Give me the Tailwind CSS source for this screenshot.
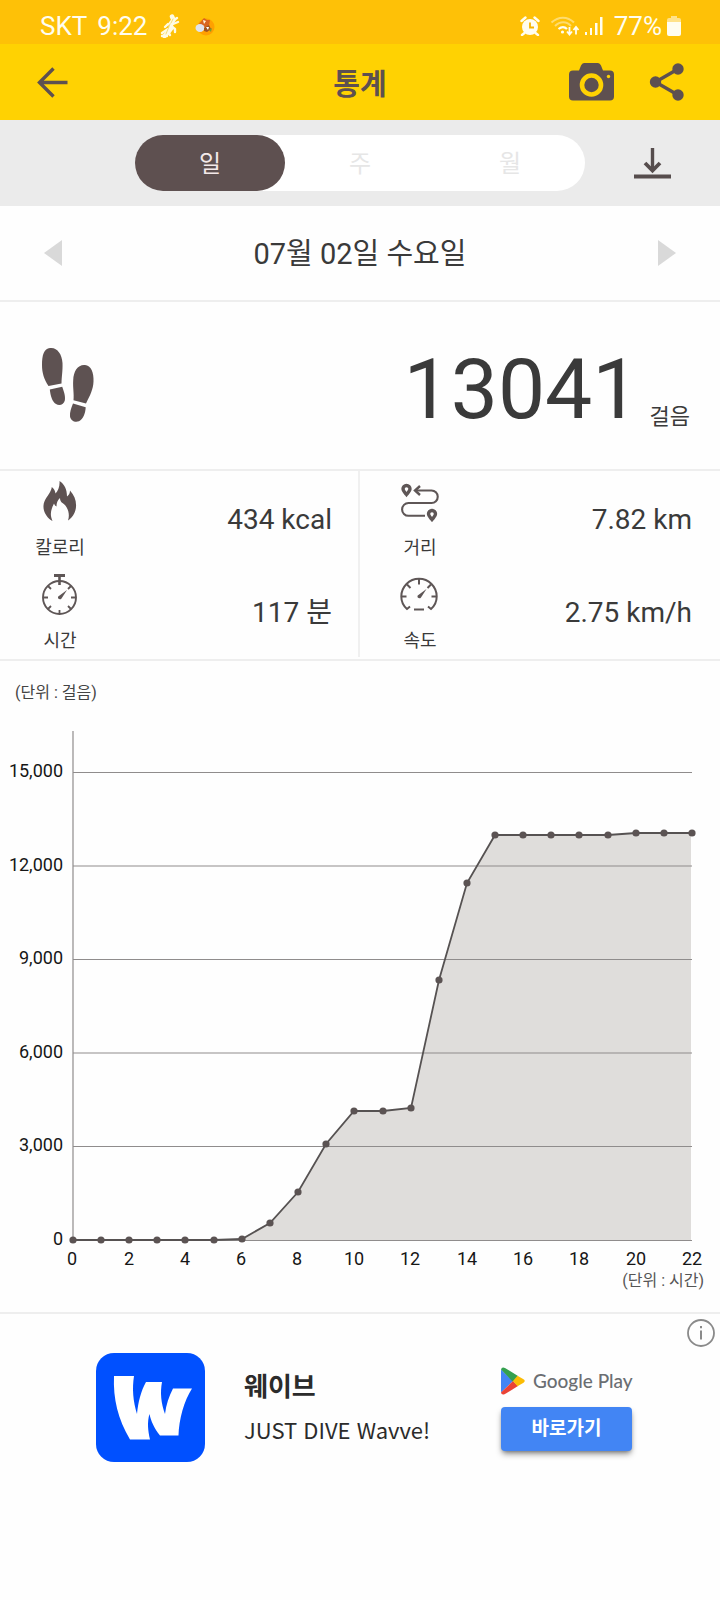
<!DOCTYPE html>
<html lang="ko">
<head>
<meta charset="utf-8">
<meta name="viewport" content="width=device-width, initial-scale=1">
<title>통계</title>
<script src="https://cdn.jsdelivr.net/npm/@tailwindcss/browser@4"></script>
</head>
<body class="min-h-screen bg-[#fefefe] font-['Roboto','Noto_Sans_CJK_KR',sans-serif] text-[#3a3a3a]">

<!-- Status bar -->
<div class="flex h-11 items-center bg-[#fec107] pt-2 pr-[38px] pl-10 text-[26px] leading-9 text-[#fffdf0]">
  <span>SKT</span><span class="ml-[10px]">9:22</span>
  <svg class="ml-3 size-6" viewBox="0 0 24 24" fill="none" stroke="#fffbe6" stroke-linecap="round" stroke-linejoin="round" aria-hidden="true">
    <path d="M13 2.500l1.500 3.500-3 4 1 4-3 4-4 4" stroke-width="4.500"/>
    <path d="M12 8l6-4M14 10l5-2M12 12l4 3 0 3M9 10l-3 3M9 15l-6 4M3 22h5M8 17l3 4" stroke-width="2.400"/>
    <path d="M11 10l-4 10M14 5l-2 4" stroke="#f3dc7a" stroke-width="1"/>
  </svg>
  <svg class="ml-3 size-5" viewBox="0 0 20 20" aria-hidden="true">
    <circle cx="11" cy="11" r="8.500" fill="#ffa000"/>
    <path d="M4 8l5-6 3 2 3 0-1 6-5 2z" fill="#d9641f"/>
    <path d="M8 4l3 1-2 3z" fill="#fff4dd"/>
    <ellipse cx="5" cy="12" rx="4.500" ry="4" fill="#dfe4ee"/>
    <path d="M9 12l5-3 2 4-4 3-3-1z" fill="#a2541f"/>
    <path d="M11 11l3 0-1 3z" fill="#fff"/>
    <path d="M14 14l3-2-1 4z" fill="#7d9b2c"/>
  </svg>
  <svg class="ml-auto size-5" viewBox="0 0 20 20" fill="none" aria-hidden="true">
    <circle cx="10" cy="11" r="8" fill="#fffdf0"/>
    <path d="M1.500 5l4-3.500M18.500 5l-4-3.500M4.500 17l-2.500 2M15.500 17l2.500 2" stroke="#fffdf0" stroke-width="2.400" stroke-linecap="round"/>
    <path d="M10 6.500v5h4" stroke="#f5b400" stroke-width="1.800"/>
  </svg>
  <svg class="ml-2.5 h-5 w-7.5" viewBox="0 0 30 20" fill="none" stroke="#fffdf0" aria-hidden="true">
    <path d="M1.500 6.500c7-6.500 16-6.500 22.500 0M5 10c5-5 11.500-5 16 0" stroke-width="2" opacity=".45"/>
    <path d="M8.500 13c3-2.500 6-2.500 8.500 0" stroke-width="2.200"/>
    <circle cx="12.500" cy="16" r="1.600" fill="#fffdf0" stroke="none"/>
    <path d="M19.500 11v7M17 15.500l2.500 3 2.500-3M26 18.500v-7M23.500 14l2.500-3 2.500 3" stroke-width="1.800"/>
  </svg>
  <svg class="ml-1 h-5 w-5" viewBox="0 0 20 20" fill="#fffdf0" aria-hidden="true">
    <path d="M1 16h2v3H1zM6 12h2v7H6zM11 7h2.500v12H11zM16 1h2.500v18H16z"/>
  </svg>
  <span class="ml-2.5">77%</span>
  <svg class="ml-1 h-5 w-4" viewBox="0 0 16 20" aria-hidden="true">
    <path d="M5 0h6v2h2q2 0 2 2v3H1V4q0-2 2-2h2z" fill="#ffe28a"/>
    <path d="M1 6h14v12q0 2-2 2H3q-2 0-2-2z" fill="#fffdf0"/>
  </svg>
</div>

<!-- Title bar -->
<header class="grid h-[76px] grid-cols-[1fr_auto_1fr] items-center bg-[#ffd202] px-9 text-[#5e5050]">
  <button type="button" aria-label="뒤로" class="w-9">
    <svg class="h-9 w-9" viewBox="0 0 36 36" fill="none" stroke="currentColor" stroke-width="3.400"><path d="M31.500 18.500H4.500M17.500 4.500l-14 14 14 14"/></svg>
  </button>
  <h1 class="pt-1.5 text-[29px] leading-9 font-bold">통계</h1>
  <div class="flex items-center justify-end gap-8">
    <button type="button" aria-label="카메라">
      <svg class="h-10 w-12" viewBox="0 0 48 40" fill="currentColor" aria-hidden="true">
        <path d="M13 3.500q1-2.500 3-2.500h14q2 0 3 2.500l2 5h7q4 0 4 4v22q0 4-4 4H5q-4 0-4-4v-22q0-4 4-4h6z"/>
        <circle cx="23.500" cy="23" r="9.500" fill="none" stroke="#ffd202" stroke-width="4.600"/>
        <circle cx="40.500" cy="14.500" r="1.700" fill="#ffd202"/>
      </svg>
    </button>
    <button type="button" aria-label="공유">
      <svg class="h-10 w-9" viewBox="0 0 36 40" fill="currentColor" aria-hidden="true">
        <path d="M30 7L7.500 20 30 33" fill="none" stroke="currentColor" stroke-width="3.400"/>
        <circle cx="30" cy="7" r="5.700"/><circle cx="7.500" cy="20" r="5.700"/><circle cx="30" cy="33" r="5.700"/>
      </svg>
    </button>
  </div>
</header>

<!-- Period tabs -->
<nav class="grid h-[86px] grid-cols-[3fr_10fr_3fr] items-center bg-[#ebebeb]">
  <div class="col-start-2 grid h-14 grid-cols-3 rounded-full bg-white text-2xl text-[#e6e6e6]">
    <button type="button" aria-pressed="true" class="rounded-full bg-[#5e5050] pt-0.5 text-[#f3e9e9]">일</button>
    <button type="button" aria-pressed="false" class="rounded-full pt-0.5">주</button>
    <button type="button" aria-pressed="false" class="rounded-full pt-0.5">월</button>
  </div>
  <button type="button" aria-label="다운로드" class="ml-12 w-10">
    <svg class="h-9 w-10" viewBox="0 0 40 36" fill="none" stroke="#564d4d" aria-hidden="true">
      <path d="M19.500 3v21" stroke-width="3.400"/><path d="M12 18l7.500 7.500L27 18" stroke-width="3.800"/><path d="M1 31.500h37" stroke-width="3.800"/>
    </svg>
  </button>
</nav>

<main>
  <!-- Date picker -->
  <section class="flex h-24 items-center justify-between border-b-2 border-[#eeeeee] px-11">
    <button type="button" aria-label="이전 날짜"><svg class="h-[26px] w-[18px]" viewBox="0 0 18 26"><path d="M18 0v26L0 13z" fill="#d9d9d9"/></svg></button>
    <h2 class="pt-0.5 text-[29px] leading-10">07월 02일 수요일</h2>
    <button type="button" aria-label="다음 날짜"><svg class="h-[26px] w-[18px]" viewBox="0 0 18 26"><path d="M0 0v26l18-13z" fill="#d9d9d9"/></svg></button>
  </section>

  <!-- Step total -->
  <section class="flex h-[169px] items-center justify-between border-b-2 border-[#eeeeee] pr-[30px] pl-10">
    <svg class="mb-1 h-20 w-14" viewBox="0 0 56 80" fill="#5e5252" aria-hidden="true">
      <path d="M10 4c7-1 12 6 12.500 15 .3 8-.8 13-1 20.500L8.500 42C4 35 2 29 2 21 2 11 4 4.500 10 4z"/>
      <path d="M9.800 45.500l12.400-2.800c2 5.300 3.500 10.300 2.600 13.800-.8 4-5.300 5.600-8.800 3.500-4-2.500-5.500-8.500-6.200-14.500z"/>
      <path d="M45 21c6 .5 9 7.500 8.500 16.500-.3 8-3.500 14-7.500 22l-12.500-3.300c.7-7-.8-12-.3-20C33.500 27 38 20.300 45 21z"/>
      <path d="M33 59.500l12.700 3.800c-.3 6-2.500 12-6.700 14-4 1.500-8.500-.5-9-5-.3-4 1-8 3-12.800z"/>
    </svg>
    <p class="flex items-baseline gap-2.5 pt-2">
      <span class="text-[84px] leading-none">13041</span><span class="translate-y-1.5 text-[22px]">걸음</span>
    </p>
  </section>

  <!-- Stats -->
  <section class="grid grid-cols-2 border-b-2 border-[#eeeeee]">
    <dl class="mb-0.5 border-r-2 border-[#f0f0f0] pr-[26px]">
      <div class="flex h-[93px] items-center justify-between pt-1 pl-[30px]">
        <dt class="flex w-[60px] flex-col items-center text-lg leading-6">
          <svg class="mb-3.5 h-[42px] w-[42px]" viewBox="0 0 42 42" fill="#5e5252" aria-hidden="true">
            <path d="M13.500 41C8 38 4 32 4.500 25.500 5 20 8.500 16.500 10.500 13c1.500-2.500 2-4 2.300-6 2.400 2 3.400 4 3.700 6.500 2.500-3 4.500-7 4-12.500 5 3 7.500 8.500 7.500 15.500 2-1.500 3-3.500 3-6 4.500 5 6.500 10.500 6 16.500-.5 6-4 11-8 13.500 2.500-7-1-15-5.500-17.500-1.500-1-2.500-2.500-2.500-5-2.500 2-3.500 5-3.500 8.500-1-.5-2-1.500-2.500-3-3 6-4.500 11-1.500 17.500z"/>
          </svg>칼로리</dt>
        <dd class="text-[28px] leading-9">434 kcal</dd>
      </div>
      <div class="flex h-[93px] items-center justify-between pt-1 pl-[30px]">
        <dt class="flex w-[60px] flex-col items-center text-lg leading-6">
          <svg class="mb-3.5 h-[42px] w-[42px]" viewBox="0 0 42 42" fill="none" stroke="#5e5656" aria-hidden="true">
            <circle cx="20.500" cy="24.500" r="16.500" stroke-width="1.900"/>
            <path d="M15 2.500h11" stroke-width="3"/><path d="M20.500 3v9" stroke-width="2.600"/>
            <path d="M20.500 37v4M4 24.500h5M32 24.500h5M9 13l3 3M32 13l-3 3M9 36l3-3M32 36l-3-3" stroke-width="1.800"/>
            <path d="M28 17l-5.500 8.500c-1.500 2-4.500 0-3.300-2z" fill="#5e5656" stroke="none"/>
          </svg>시간</dt>
        <dd class="text-[28px] leading-9">117 분</dd>
      </div>
    </dl>
    <dl class="pr-[28px]">
      <div class="flex h-[93px] items-center justify-between pt-1 pl-[30px]">
        <dt class="flex w-[60px] flex-col items-center text-lg leading-6">
          <svg class="mb-3.5 h-[42px] w-[42px]" viewBox="0 0 42 42" fill="none" stroke="#5e5656" aria-hidden="true">
            <path d="M17 10.500h15.500a6.200 6.200 0 0 1 0 12.500H9.500a6.200 6.200 0 0 0 0 12.800H26" stroke-width="2.100"/>
            <path d="M21 6l-5 4.500 5 4.500" stroke-width="2.400"/>
            <path d="M7.500 14.500c-2-2.500-3.500-3.500-3.500-5.500a3.500 3.500 0 0 1 7 0c0 2-1.500 3-3.500 5.500zM33 39.500c-2-2.500-3.500-3.500-3.500-5.500a3.500 3.500 0 0 1 7 0c0 2-1.500 3-3.500 5.500z" stroke-width="3.400"/>
          </svg>거리</dt>
        <dd class="text-[28px] leading-9">7.82 km</dd>
      </div>
      <div class="flex h-[93px] items-center justify-between pt-1 pl-[30px]">
        <dt class="flex w-[60px] flex-col items-center text-lg leading-6">
          <svg class="mb-3.5 h-[42px] w-[42px]" viewBox="0 0 42 42" fill="none" stroke="#5e5656" aria-hidden="true">
            <path d="M11 33.500l-3 2.500C4 32.500 2.300 28 2.300 23.500a17.700 17.700 0 0 1 35.400 0c0 4.500-1.700 9-5.700 12.500l-3-2.500M15 36.500h10" stroke-width="2"/>
            <path d="M3 23.500h4.500M37 23.500h-4.500M20 6v5.500M8 11.500l3.500 3.500M32 11.500L28.500 15" stroke-width="2"/>
            <path d="M27.500 16l-5.500 8.500c-1.500 2-4.500 0-3.300-2z" fill="#5e5656" stroke="none"/>
          </svg>속도</dt>
        <dd class="text-[28px] leading-9">2.75 km/h</dd>
      </div>
    </dl>
  </section>

  <!-- Hourly cumulative steps -->
  <section class="border-b-2 border-[#eeeeee]">
    <svg id="chart" class="block h-auto w-full" viewBox="0 0 720 651" role="img" aria-label="시간별 걸음 수">
      <text x="15" y="37" font-size="16" fill="#444">(단위 : 걸음)</text>
      <path d="M73 580 L241 578 L269 562 L298 531 L326 483 L354 450 L382 450 L411 447 L439 319 L467 222 L495 174 L607 174 L636 172 L691 172 V579z" fill="#dfdddb"/>
      <path d="M73 111.500H692M73 205H692M73 298.500H692M73 392H692M73 485.500H692M73 579.500H692M73 70V580" fill="none" stroke="#8f8c8c" stroke-width="1.200"/>
      <polyline points="73,579 101,579 129,579 157,579 185,579 214,579 242,578 270,562 298,531 326,483 354,450 383,450 411,447 439,319 467,222 495,174 523,174 551,174 579,174 608,174 636,172 664,172 692,172" fill="none" stroke="#565252" stroke-width="1.800"/>
      <g fill="#5b5353">
        <circle cx="73" cy="579" r="3.600"/><circle cx="101" cy="579" r="3.600"/><circle cx="129" cy="579" r="3.600"/><circle cx="157" cy="579" r="3.600"/><circle cx="185" cy="579" r="3.600"/><circle cx="214" cy="579" r="3.600"/><circle cx="242" cy="578" r="3.600"/><circle cx="270" cy="562" r="3.600"/><circle cx="298" cy="531" r="3.600"/><circle cx="326" cy="483" r="3.600"/><circle cx="354" cy="450" r="3.600"/><circle cx="383" cy="450" r="3.600"/><circle cx="411" cy="447" r="3.600"/><circle cx="439" cy="319" r="3.600"/><circle cx="467" cy="222" r="3.600"/><circle cx="495" cy="174" r="3.600"/><circle cx="523" cy="174" r="3.600"/><circle cx="551" cy="174" r="3.600"/><circle cx="579" cy="174" r="3.600"/><circle cx="608" cy="174" r="3.600"/><circle cx="636" cy="172" r="3.600"/><circle cx="664" cy="172" r="3.600"/><circle cx="692" cy="172" r="3.600"/>
      </g>
      <g font-size="18" fill="#161616" text-anchor="end">
        <text x="63" y="116">15,000</text><text x="63" y="210">12,000</text><text x="63" y="303">9,000</text><text x="63" y="397">6,000</text><text x="63" y="490">3,000</text><text x="63" y="584">0</text>
      </g>
      <g font-size="18" fill="#161616" text-anchor="middle">
        <text x="72" y="604">0</text><text x="129" y="604">2</text><text x="185" y="604">4</text><text x="241" y="604">6</text><text x="297" y="604">8</text><text x="354" y="604">10</text><text x="410" y="604">12</text><text x="467" y="604">14</text><text x="523" y="604">16</text><text x="579" y="604">18</text><text x="636" y="604">20</text><text x="692" y="604">22</text>
      </g>
      <text x="704" y="625" font-size="16" fill="#555" text-anchor="end">(단위 : 시간)</text>
    </svg>
  </section>
</main>

<!-- Advertisement -->
<aside class="relative flex items-start pt-[39px] pr-[88px] pl-24">
  <button type="button" aria-label="광고 정보" class="absolute top-1 right-1">
    <svg class="size-[30px]" viewBox="0 0 30 30" fill="none" stroke="#8a8a8a" stroke-width="1.800"><circle cx="15" cy="15" r="13"/><path d="M15 12.500v9M15 8v2.300" stroke-width="2"/></svg>
  </button>
  <svg class="h-[109px] w-[109px]" viewBox="0 0 109 109" role="img" aria-label="Wavve">
    <rect width="109" height="109" rx="18" fill="#0050ff"/>
    <path d="M18 23H38C36 36 37 48 41 61 42 49 45 38 50 29H66C64 40 65 50 69 61 70 52 73 43 77 35.500H96C88 48 83 66 82.500 82.500H64C58 75 55 68 53.500 61 51 69 52 78 54 86.500H34C22 66 17 46 18 23z" fill="#fff"/>
  </svg>
  <div class="ml-[39px] flex-1 pt-4 text-[#2b2b2b]">
    <p class="text-[26px] leading-9 font-bold">웨이브</p>
    <p class="mt-1.5 font-['Noto_Sans_CJK_KR',sans-serif] text-[22px] leading-9">JUST DIVE Wavve!</p>
  </div>
  <div class="w-[131px] pt-3.5">
    <p class="flex h-7 items-center gap-2 font-['Lato',sans-serif] text-[19px] font-medium whitespace-nowrap text-[#6b6e72]">
      <svg class="h-7 w-6 shrink-0" viewBox="0 0 24 28" aria-hidden="true">
        <path d="M0 2.500v23L12 14z" fill="#4285f4"/>
        <path d="M0 3Q.5-.5 4 1l13 8-5 6L.500 3z" fill="#34a04f"/>
        <path d="M0 25.500Q.5 28.500 4 27l13-8-5-5z" fill="#ea4335"/>
        <path d="M16.500 8.800L22.500 12.300q2.500 1.700 0 3.400l-6 3.500L12 14z" fill="#fbbc04"/>
      </svg>Google Play</p>
    <a href="#" class="mt-3 flex h-11 items-center justify-center rounded bg-[#4285f4] text-[19px] font-bold text-white shadow-md shadow-black/40">바로가기</a>
  </div>
</aside>
</body>
</html>
